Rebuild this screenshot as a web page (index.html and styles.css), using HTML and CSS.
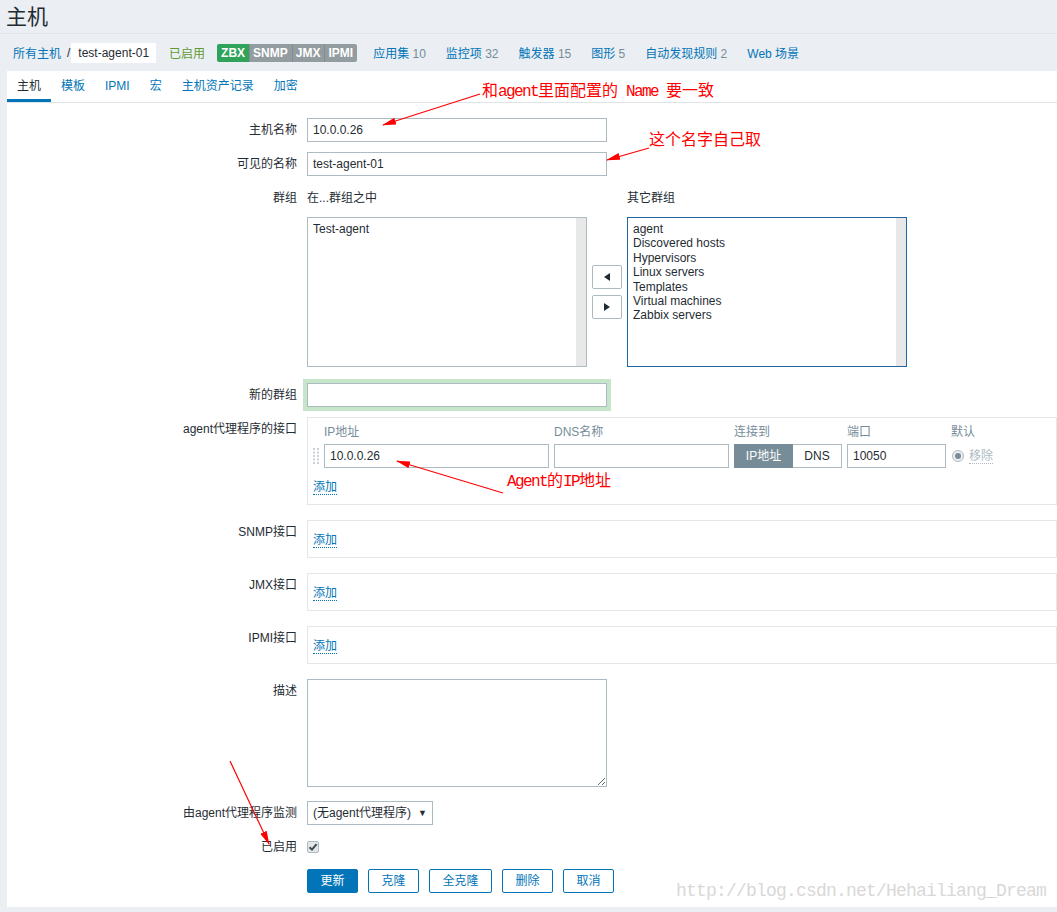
FILE: index.html
```html
<!DOCTYPE html>
<html lang="zh-CN">
<head>
<meta charset="utf-8">
<title>主机</title>
<link rel="stylesheet" href="styles.css">
</head>
<body>
<header class="page-header"><h1 class="title">主机</h1></header>

<nav class="objnav">
  <a class="link crumb">所有主机</a>
  <span class="sep">/</span>
  <span class="crumb-current">test-agent-01</span>
  <span class="status-on">已启用</span>
  <span class="badges"><span class="badge green">ZBX</span><span class="badge grey">SNMP</span><span class="badge grey">JMX</span><span class="badge grey">IPMI</span></span>
  <a class="link navlink first">应用集 <span class="count">10</span></a>
  <a class="link navlink">监控项 <span class="count">32</span></a>
  <a class="link navlink">触发器 <span class="count">15</span></a>
  <a class="link navlink">图形 <span class="count">5</span></a>
  <a class="link navlink">自动发现规则 <span class="count">2</span></a>
  <a class="link navlink">Web 场景</a>
</nav>

<main class="panel">
  <ul class="tabs">
    <li class="tab active">主机</li>
    <li class="tab">模板</li>
    <li class="tab">IPMI</li>
    <li class="tab">宏</li>
    <li class="tab">主机资产记录</li>
    <li class="tab">加密</li>
  </ul>

  <div class="form">
    <div class="row">
      <div class="label">主机名称</div>
      <input class="input" type="text" value="10.0.0.26">
    </div>
    <div class="row">
      <div class="label">可见的名称</div>
      <input class="input" type="text" value="test-agent-01">
    </div>
    <div class="row">
      <div class="label">群组</div>
      <div class="twin">
        <div class="twin-col">
          <div class="twin-head">在...群组之中</div>
          <div class="listbox">
            <div class="list-items"><div>Test-agent</div></div>
            <div class="list-scroll"></div>
          </div>
        </div>
        <div class="twin-btns">
          <span class="arrow-btn"><svg width="6" height="8" viewBox="0 0 6 8"><polygon points="6,0 0,4 6,8" fill="#1f2c33"/></svg></span>
          <span class="arrow-btn"><svg width="6" height="8" viewBox="0 0 6 8"><polygon points="0,0 6,4 0,8" fill="#1f2c33"/></svg></span>
        </div>
        <div class="twin-col">
          <div class="twin-head">其它群组</div>
          <div class="listbox focused">
            <div class="list-items">
              <div>agent</div>
              <div>Discovered hosts</div>
              <div>Hypervisors</div>
              <div>Linux servers</div>
              <div>Templates</div>
              <div>Virtual machines</div>
              <div>Zabbix servers</div>
            </div>
            <div class="list-scroll"></div>
          </div>
        </div>
      </div>
    </div>
    <div class="row gap16">
      <div class="label">新的群组</div>
      <input class="input glow" type="text" value="">
    </div>
    <div class="row">
      <div class="label">agent代理程序的接口</div>
      <div class="ifbox agent">
        <div class="if-grid">
          <span></span>
          <span class="if-head">IP地址</span>
          <span class="if-head">DNS名称</span>
          <span class="if-head">连接到</span>
          <span class="if-head">端口</span>
          <span class="if-head">默认</span>
          <span class="drag"><svg width="6" height="16" viewBox="0 0 6 16"><g fill="#c9d1d6"><rect x="0" y="0" width="2" height="2"/><rect x="4" y="0" width="2" height="2"/><rect x="0" y="3.5" width="2" height="2"/><rect x="4" y="3.5" width="2" height="2"/><rect x="0" y="7" width="2" height="2"/><rect x="4" y="7" width="2" height="2"/><rect x="0" y="10.5" width="2" height="2"/><rect x="4" y="10.5" width="2" height="2"/><rect x="0" y="14" width="2" height="2"/><rect x="4" y="14" width="2" height="2"/></g></svg></span>
          <input class="input fill" type="text" value="10.0.0.26">
          <input class="input fill" type="text" value="">
          <span class="toggle"><span class="tg-on">IP地址</span><span class="tg-off">DNS</span></span>
          <input class="input fill" type="text" value="10050">
          <span class="default-cell"><span class="radio"><span class="radio-dot"></span></span><span class="remove">移除</span></span>
        </div>
        <a class="add">添加</a>
      </div>
    </div>
    <div class="row gap15">
      <div class="label">SNMP接口</div>
      <div class="ifbox simple"><a class="add">添加</a></div>
    </div>
    <div class="row gap15">
      <div class="label">JMX接口</div>
      <div class="ifbox simple"><a class="add">添加</a></div>
    </div>
    <div class="row gap15">
      <div class="label">IPMI接口</div>
      <div class="ifbox simple"><a class="add">添加</a></div>
    </div>
    <div class="row gap15">
      <div class="label">描述</div>
      <textarea class="textarea"></textarea>
    </div>
    <div class="row gap14">
      <div class="label">由agent代理程序监测</div>
      <div class="select"><span>(无agent代理程序)</span><span class="caret">▼</span></div>
    </div>
    <div class="row">
      <div class="label">已启用</div>
      <span class="checkbox"><svg width="10" height="10" viewBox="0 0 10 10"><path d="M1.5 5.2 L4 7.6 L8.6 2.2" fill="none" stroke="#3c4a52" stroke-width="2"/></svg></span>
    </div>
    <div class="row gap15">
      <div class="label"></div>
      <div class="buttons">
        <button class="btn primary">更新</button>
        <button class="btn">克隆</button>
        <button class="btn">全克隆</button>
        <button class="btn">删除</button>
        <button class="btn">取消</button>
      </div>
    </div>
  </div>
</main>

<div class="notes">
  <svg class="note-lines" width="1057" height="912" viewBox="0 0 1057 912">
    <defs>
      <marker id="ah" markerWidth="14" markerHeight="8" refX="13" refY="4" orient="auto" markerUnits="userSpaceOnUse">
        <polygon points="0,0.5 14,4 0,7.5" fill="#ff0000"/>
      </marker>
    </defs>
    <g stroke="#ff0000" stroke-width="1.2" fill="none">
      <line x1="480" y1="94" x2="383" y2="125" marker-end="url(#ah)"/>
      <line x1="649" y1="148" x2="607" y2="160" marker-end="url(#ah)"/>
      <line x1="503" y1="493" x2="397" y2="461" marker-end="url(#ah)"/>
      <line x1="230" y1="761" x2="269" y2="844" marker-end="url(#ah)"/>
    </g>
  </svg>
  <div class="note n1">和<span class="lat">agent</span>里面配置的<span class="lat"> Name </span>要一致</div>
  <div class="note n2">这个名字自己取</div>
  <div class="note n3"><span class="lat">Agent</span>的<span class="lat">IP</span>地址</div>
  <div class="watermark">http://blog.csdn.net/Hehailiang_Dream</div>
</div>
</body>
</html>
```

FILE: styles.css
```css
* { box-sizing: border-box; }
html, body { margin: 0; padding: 0; }
body {
  position: relative;
  width: 1057px;
  height: 912px;
  overflow: hidden;
  background: #ebeef2;
  font-family: "Liberation Sans", "Noto Sans CJK SC", sans-serif;
  font-size: 12px;
  color: #1f2c33;
}

/* header */
.page-header {
  height: 34px;
  border-bottom: 1px solid #dfe4e7;
  padding-left: 6px;
}
.title {
  margin: 0;
  font-size: 21px;
  font-weight: normal;
  line-height: 33px;
}

/* object navigation */
.objnav {
  height: 37px;
  display: flex;
  align-items: center;
  padding-left: 13px;
  white-space: nowrap;
}
.link { color: #0275b8; text-decoration: none; }
.sep { margin-left: 6px; }
.crumb-current {
  margin-left: 1px;
  height: 20px;
  line-height: 20px;
  padding: 0 7px;
  background: #fff;
}
.status-on { margin-left: 13px; color: #5f9a33; }
.badges {
  margin-left: 12px;
  display: flex;
  border-radius: 2px;
  overflow: hidden;
}
.badge {
  height: 18px;
  line-height: 18px;
  padding: 0 4px;
  color: #fff;
  font-weight: bold;
}
.badge + .badge { box-shadow: inset 1px 0 0 rgba(0, 0, 0, 0.1); }
.badge.green { background: #2fa35a; }
.badge.grey { background: #939ca1; }
.navlink { margin-left: 20px; }
.navlink.first { margin-left: 16px; }
.count { color: #768d99; }

/* panel */
.panel {
  margin-left: 7px;
  background: #fff;
  padding-bottom: 14px;
}
.tabs {
  display: flex;
  list-style: none;
  margin: 0;
  padding: 0;
  border-bottom: 1px solid #dfe4e7;
}
.tab {
  padding: 0 10px;
  line-height: 31px;
  color: #0275b8;
}
.tab.active {
  color: #1f2c33;
  box-shadow: inset 0 -3px 0 #0275b8;
}

/* form */
.form { padding-top: 15px; }
.row { display: flex; column-gap: 10px; align-items: flex-start; }
.row + .row { margin-top: 10px; }
.row.gap14 { margin-top: 14px; }
.row.gap15 { margin-top: 15px; }
.row.gap16 { margin-top: 16px; }
.label {
  flex: none;
  width: 290px;
  text-align: right;
  padding-top: 5px;
  line-height: 14px;
}
.input {
  width: 300px;
  height: 24px;
  border: 1px solid #acbbc2;
  border-radius: 0;
  padding: 0 5px;
  font: inherit;
  color: #1f2c33;
  background: #fff;
  outline: none;
}
.input.glow { box-shadow: 0 0 0 4px #c7e5c9; }
.input.fill { width: 100%; }

/* twin list */
.twin { display: flex; column-gap: 5px; }
.twin-col { width: 280px; }
.twin-head { padding-top: 5px; line-height: 14px; margin-bottom: 12px; }
.listbox {
  height: 150px;
  border: 1px solid #acbbc2;
  display: flex;
}
.listbox.focused { border-color: #1f66a3; }
.list-items {
  flex: 1;
  padding: 4px 5px 3px;
  line-height: 14.4px;
}
.list-scroll { width: 10px; background: #e8e8e8; }
.twin-btns {
  width: 30px;
  margin-top: 31px;
  height: 150px;
  display: flex;
  flex-direction: column;
  justify-content: center;
  row-gap: 6px;
}
.arrow-btn {
  height: 24px;
  border: 1px solid #acbbc2;
  border-radius: 2px;
  background: #fff;
  display: flex;
  align-items: center;
  justify-content: center;
}

/* interfaces */
.ifbox {
  flex: 1;
  border: 1px solid #e4e7ea;
  padding: 0 5px 9px;
}
.ifbox.agent { padding-top: 7px; }
.ifbox.simple { padding-top: 12px; }
.if-grid {
  display: grid;
  grid-template-columns: 6px 225px 175px 108px 99px auto;
  column-gap: 5px;
  row-gap: 5px;
  align-items: center;
}
.if-head { color: #768d99; line-height: 14px; }
.drag { display: flex; align-items: center; height: 24px; }
.toggle { display: flex; height: 24px; }
.tg-on {
  width: 59px;
  background: #768d99;
  color: #fff;
  text-align: center;
  line-height: 24px;
}
.tg-off {
  flex: 1;
  border: 1px solid #acbbc2;
  border-left: none;
  text-align: center;
  line-height: 22px;
}
.default-cell { display: flex; align-items: center; column-gap: 5px; padding-left: 1px; }
.radio {
  width: 12px;
  height: 12px;
  border-radius: 50%;
  border: 1px solid #acbbc2;
  background: #ebeef2;
  display: flex;
  align-items: center;
  justify-content: center;
}
.radio-dot { width: 6px; height: 6px; border-radius: 50%; background: #7d8b93; }
.remove {
  color: #acbbc2;
  line-height: 14px;
  border-bottom: 1px dotted #acbbc2;
}
.add {
  display: inline-block;
  color: #0275b8;
  line-height: 14px;
  border-bottom: 1px dotted #0275b8;
}
.ifbox.agent .add { margin-top: 12px; }

/* misc controls */
.textarea {
  width: 300px;
  height: 108px;
  border: 1px solid #acbbc2;
  border-radius: 0;
  margin: 0;
  padding: 4px 5px;
  font: inherit;
  display: block;
  outline: none;
}
.select {
  width: 126px;
  height: 24px;
  border: 1px solid #acbbc2;
  padding: 0 5px 0 5px;
  display: flex;
  align-items: center;
  justify-content: space-between;
  line-height: 22px;
}
.caret { font-size: 9px; }
.checkbox {
  margin-top: 6px;
  width: 12px;
  height: 12px;
  border: 1px solid #acbbc2;
  background: #e3e7ea;
  border-radius: 2px;
  display: flex;
  align-items: center;
  justify-content: center;
}
.buttons { display: flex; column-gap: 10px; }
.btn {
  height: 24px;
  padding: 0 12.5px;
  border: 1px solid #0275b8;
  border-radius: 2px;
  background: #fff;
  color: #0275b8;
  font: inherit;
  line-height: 22px;
}
.btn.primary { background: #0275b8; color: #fff; }

/* annotations overlay */
.notes {
  position: absolute;
  left: 0;
  top: 0;
  width: 1057px;
  height: 912px;
  pointer-events: none;
}
.note-lines { position: absolute; left: 0; top: 0; }
.note {
  position: absolute;
  color: #ff0000;
  font-family: "Liberation Mono", "Noto Sans CJK SC", monospace;
  font-size: 16px;
  line-height: 16px;
  white-space: pre;
}
.lat { font-family: "Liberation Mono", monospace; letter-spacing: -1.6px; }
.n1 { left: 482px; top: 84px; }
.n2 { left: 649px; top: 133px; }
.n3 { left: 507px; top: 474px; }
.watermark {
  position: absolute;
  left: 676px;
  top: 881px;
  font-family: "Liberation Mono", monospace;
  font-size: 18px;
  letter-spacing: -0.8px;
  line-height: 20px;
  color: #d8d8d8;
  white-space: nowrap;
}
```
